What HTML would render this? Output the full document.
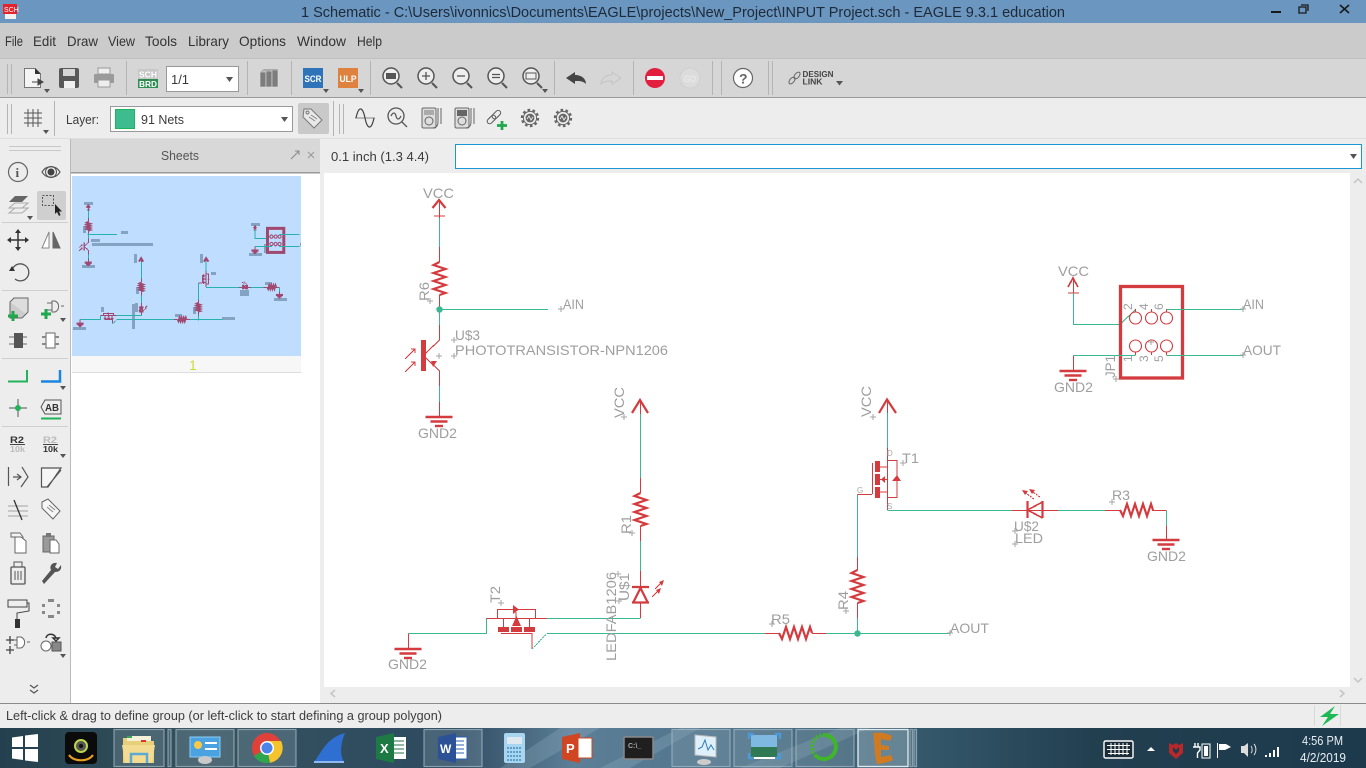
<!DOCTYPE html>
<html><head><meta charset="utf-8"><title>EAGLE Schematic</title>
<style>
html,body{margin:0;padding:0;width:1366px;height:768px;overflow:hidden;background:#ededed}
svg{display:block;position:absolute;left:0;top:0}
text{font-family:"Liberation Sans",sans-serif}
.r{stroke:var(--r);fill:none;stroke-width:var(--w);shape-rendering:crispEdges}
.g{stroke:var(--g);fill:none;stroke-width:var(--w);shape-rendering:crispEdges}
.t{stroke:var(--r);fill:none;stroke-width:calc(var(--w)*2)}
.f{fill:var(--r);stroke:none}
.st{fill:#9e9e9e;font-size:14px}
.sm{fill:#a8a8a8;font-size:8px}
.ui{fill:#3a3a3a;font-size:13px}
.ic{fill:none;stroke:#555;stroke-width:1.3}
.sep{stroke:#b4b4b4;stroke-width:1}
.tb{fill:#8fa6b2;fill-opacity:.28;stroke:#a9bcc6;stroke-opacity:.7;stroke-width:1.2}
.dd{fill:#555}
</style></head>
<body>
<svg width="1366" height="768" viewBox="0 0 1366 768" xmlns="http://www.w3.org/2000/svg">
<defs>
<linearGradient id="tk" x1="0" x2="1" y1="0" y2="0">
<stop offset="0" stop-color="#24404e"/><stop offset=".15" stop-color="#35525e"/><stop offset=".33" stop-color="#2d4a60"/><stop offset=".42" stop-color="#5c7f97"/><stop offset=".55" stop-color="#4d7289"/><stop offset=".68" stop-color="#34576a"/><stop offset=".8" stop-color="#223f50"/><stop offset="1" stop-color="#1c3a4c"/>
</linearGradient>
<clipPath id="mapc"><rect x="72" y="176" width="229" height="180"/></clipPath>
<path id="p" d="M-3 0H3M0 -3V3" stroke="#a6a6a6" fill="none" stroke-width="1"/>
<g id="mg"><circle cx="-1" cy="-2" r="8" fill="#eee" stroke="#555" stroke-width="1.5"/><path d="M5 5L10 10" stroke="#555" stroke-width="2"/></g>
<g id="gear"><circle r="8" fill="none" stroke="#666" stroke-width="2.4" stroke-dasharray="2.6 2.4"/><circle r="6.6" fill="#ededed" stroke="#666" stroke-width="1"/><circle r="4.4" fill="#666"/><path d="M-3 1L-1 -2L1 2L3 -1" stroke="#eee" fill="none" stroke-width=".9"/></g>
<polyline id="rv" points="0,0 -6,3 6,7 -6,11 6,15 -6,19 6,23 -6,27 6,31 0,33" style="stroke:var(--r);fill:none;stroke-width:calc(var(--w)*2)"/>
<polyline id="rh" points="0,0 3,6 7,-6 11,6 15,-6 19,6 23,-6 27,6 31,-6 33,0" style="stroke:var(--r);fill:none;stroke-width:calc(var(--w)*2)"/>
<g id="gnd"><path d="M-13.500 0H13.500" style="stroke:var(--r);stroke-width:calc(var(--w)*2.2)"/><path d="M-8.500 4.500H8.500" style="stroke:var(--r);stroke-width:calc(var(--w)*2.2)"/><path d="M-4 9H4" style="stroke:var(--r);stroke-width:calc(var(--w)*2.2)"/></g>
<g id="sch">
<!-- U3 branch -->
<path class="t" d="M432.500 208L439 200L445.500 208"/>
<path class="r" d="M439.500 200V218M434 216H445"/>
<path class="g" d="M439.500 218V247"/><path class="r" d="M439.500 247V262"/>
<use href="#rv" x="439.500" y="262"/>
<path class="r" d="M439.500 295V309"/>
<path class="g" d="M439.500 309V325M439.500 309.500H548"/>
<circle cx="439.500" cy="309.500" r="3.200" style="fill:var(--g)"/>
<path class="r" d="M439.500 325V340L426 353M426 358L439.500 371V386"/>
<rect class="f" x="421" y="340" width="5" height="31"/>
<path class="f" d="M431 361L437 361L433 367Z"/>
<path class="r" d="M405 359L415 349M405 372L415 362M411 349H415V353M411 362H415V366"/>
<path class="g" d="M439.500 386V402"/><path class="r" d="M439.500 402V417"/>
<use href="#gnd" x="439" y="417"/>
<!-- R1 / LED branch -->
<path class="t" d="M632 413L640 400L648 413"/>
<path class="r" d="M640.500 400V414"/>
<path class="g" d="M640.500 414V478"/><path class="r" d="M640.500 478V493"/>
<use href="#rv" x="640.500" y="493"/>
<path class="r" d="M640.500 526V541"/><path class="g" d="M640.500 541V571"/>
<path class="r" d="M640.500 571V587M640.500 602V618"/>
<path class="t" d="M632 587H649M632 602.500H649M640.500 588L633.500 602M640.500 588L647.500 602"/>
<path class="r" d="M652 597L660 589M655 589L663 581"/>
<path class="f" d="M656 590L661 588L659 594ZM659 582L664 580L662 586Z"/>
<path class="g" d="M547 618.500H640.500"/>
<path class="r" d="M486 618.500H547"/>
<path class="g" d="M486.500 618.500V633.500H408.500"/>
<path class="r" d="M408.500 633.500V649M497.500 618V609.500H535.500V618M503.500 618V627M529.500 618V627M516 612V618"/>
<use href="#gnd" x="408" y="649"/>
<path class="f" d="M513 605L519 609.500L513 614ZM516.500 616L512 626H521Z"/>
<rect class="f" x="498" y="627" width="11" height="5"/><rect class="f" x="511" y="627" width="11" height="5"/><rect class="f" x="524" y="627" width="11" height="5"/>
<path class="r" d="M501 633.500H532V649"/>
<path class="g" stroke-dasharray="2 1" d="M532 649L547 633.500"/>
<path class="g" d="M547 633.500H765"/>
<path class="r" d="M765 633.500H779"/>
<use href="#rh" x="779" y="633"/>
<path class="r" d="M812 633.500H826"/>
<path class="g" d="M826 633.500H950"/>
<circle cx="857.500" cy="633.500" r="3.200" style="fill:var(--g)"/>
<!-- R4 / T1 -->
<path class="g" d="M857.500 618V633"/><path class="r" d="M857.500 603V618"/>
<use href="#rv" x="857.500" y="570"/>
<path class="r" d="M857.500 557V570"/><path class="g" d="M857.500 494V557"/>
<path class="r" d="M857.500 494.500H872M872.500 463V494"/>
<rect class="f" x="875" y="461" width="5" height="11"/><rect class="f" x="875" y="474" width="5" height="11"/><rect class="f" x="875" y="487" width="5" height="11"/>
<path class="r" d="M880 467H887.500M880 479.500H887.500M880 492H887.500M887.500 448V510M887.500 460.500H897V497.500H887.500"/>
<path class="f" d="M881 479.500L885 476V483ZM897 475L892 481H901Z"/>
<path class="t" d="M879 413L887 399.500L896 413"/>
<path class="r" d="M887.500 399V413"/>
<path class="g" d="M887.500 413V448"/>
<path class="g" d="M887.500 510.500H1012"/>
<path class="r" d="M1012 510.500H1058"/>
<path class="t" d="M1027.500 501V518M1042.500 501V518"/>
<path class="r" d="M1027.500 510L1042.500 502M1027.500 510L1042.500 518" style="stroke-width:calc(var(--w)*1.5)"/>
<path class="r" stroke-dasharray="2 1" d="M1034 499L1023 491M1040 497L1030 490"/>
<path class="f" d="M1022 490L1028 491L1025 495ZM1029 489L1035 490L1032 494Z"/>
<path class="g" d="M1058 510.500H1105"/><path class="r" d="M1105 510.500H1120"/>
<use href="#rh" x="1120" y="510"/>
<path class="r" d="M1152 510.500H1166.500"/>
<path class="g" d="M1166.500 510.500V526"/><path class="r" d="M1166.500 526V540"/>
<use href="#gnd" x="1166" y="540"/>
<!-- JP1 -->
<path class="r" style="stroke-width:calc(var(--w)*1.5)" d="M1068 287L1073 278L1078 287"/>
<path class="r" d="M1073.500 278V293M1068 293H1079"/>
<path class="g" d="M1073.500 293V324.500H1120L1136 309"/>
<rect x="1120.500" y="286.500" width="62" height="91.500" style="fill:none;stroke:var(--r);stroke-width:calc(var(--w)*3)"/>
<g style="stroke:var(--r);fill:none;stroke-width:var(--w)"><circle cx="1135.500" cy="318" r="6"/><circle cx="1151.500" cy="318" r="6"/><circle cx="1166.500" cy="318" r="6"/><circle cx="1135.500" cy="346" r="6"/><circle cx="1151.500" cy="346" r="6"/><circle cx="1166.500" cy="346" r="6"/></g>
<path class="r" d="M1135.500 309V312M1151.500 309V312M1166.500 309V312M1135.500 352V355M1151.500 352V355M1166.500 352V355"/>
<path class="g" d="M1166.500 309.500H1243M1166.500 355.500H1243M1073.500 355.500H1135.500"/>
<path class="r" d="M1073.500 355.500V371"/>
<use href="#gnd" x="1073" y="371"/>
</g>
</defs>

<!-- Title bar -->
<rect width="1366" height="23" fill="#6b96c0"/>
<rect x="3" y="4" width="14" height="10" fill="#e1242e"/><rect x="5" y="14" width="11" height="5" fill="#f0f0f0"/>
<text x="4" y="12" font-size="7" fill="#fff">SCH</text>
<text x="301" y="17" font-size="14.500" fill="#1d2a38" textLength="764" lengthAdjust="spacingAndGlyphs">1 Schematic - C:\Users\ivonnics\Documents\EAGLE\projects\New_Project\INPUT Project.sch - EAGLE 9.3.1 education</text>
<path d="M1271 12H1281" stroke="#1a1a1a" stroke-width="2"/>
<path d="M1299 7h7v6h-7zM1301 5h7v6" fill="none" stroke="#1a1a1a" stroke-width="1.300"/>
<path d="M1340 5L1349 13M1349 5L1340 13" stroke="#1a1a1a" stroke-width="1.600"/>

<!-- Menu -->
<rect y="23" width="1366" height="35" fill="#cbcbcb"/>
<g font-size="14" fill="#333">
<text x="5" y="46" textLength="18" lengthAdjust="spacingAndGlyphs">File</text><text x="33" y="46" textLength="23" lengthAdjust="spacingAndGlyphs">Edit</text><text x="67" y="46" textLength="31" lengthAdjust="spacingAndGlyphs">Draw</text><text x="108" y="46" textLength="27" lengthAdjust="spacingAndGlyphs">View</text><text x="145" y="46" textLength="32" lengthAdjust="spacingAndGlyphs">Tools</text><text x="188" y="46" textLength="41" lengthAdjust="spacingAndGlyphs">Library</text><text x="239" y="46" textLength="47" lengthAdjust="spacingAndGlyphs">Options</text><text x="297" y="46" textLength="49" lengthAdjust="spacingAndGlyphs">Window</text><text x="357" y="46" textLength="25" lengthAdjust="spacingAndGlyphs">Help</text>
</g>

<!-- Toolbar 1 -->
<rect y="58" width="1366" height="40" fill="#d6d6d6"/>
<rect y="58" width="1366" height="1" fill="#c0c0c0"/>
<rect y="97" width="1366" height="1" fill="#999"/>
<path class="sep" d="M7.500 64V94M11.500 64V94M126.500 61V95M247.500 61V95M291.500 61V95M370.500 61V95M554.500 61V95M633.500 61V95M712.500 61V95M721.500 61V95M768.500 61V95M772.500 61V95"/>
<path d="M24.500 68.500H35L40.500 74V87.500H24.500Z" fill="#f4f4f4" stroke="#777"/><path d="M35 68L41 74H35Z" fill="#333"/><path d="M32 82H40M38 79L43 82L38 85Z" stroke="#444" fill="#444"/>
<path class="dd" d="M44 89H50L47 93Z"/>
<rect x="59" y="68" width="20" height="20" rx="2" fill="#585858"/><rect x="63" y="69" width="12" height="7" fill="#d6d6d6"/><rect x="64" y="81" width="11" height="7" fill="#f0f0f0"/>
<rect x="98" y="68" width="12" height="6" fill="#eee" stroke="#999"/><rect x="94" y="74" width="20" height="9" rx="1" fill="#9a9a9a"/><rect x="98" y="80" width="12" height="7" fill="#eee" stroke="#999"/>
<rect x="138" y="69" width="20" height="10" fill="#c8c8c8"/><rect x="138" y="79" width="20" height="9" fill="#2f8c52"/>
<text x="139" y="77.500" font-size="8.500" font-weight="bold" fill="#fff" textLength="18" lengthAdjust="spacingAndGlyphs">SCH</text><text x="139" y="87" font-size="8.500" font-weight="bold" fill="#fff" textLength="18" lengthAdjust="spacingAndGlyphs">BRD</text>
<rect x="166.500" y="66.500" width="72" height="25" fill="#fff" stroke="#999"/>
<text x="171" y="84" class="ui" textLength="18" lengthAdjust="spacingAndGlyphs">1/1</text><path class="dd" d="M226 77H233L229.500 82Z"/>
<g fill="#7d7d7d" stroke="#ddd" stroke-width=".6"><rect x="260" y="72" width="6" height="15"/><rect x="266" y="71" width="6" height="16"/><rect x="272" y="70" width="6" height="17"/></g><path d="M260 72L264 69H278V70" fill="#aaa"/>
<rect x="303" y="68" width="20" height="20" fill="#2f74b8"/><text x="304.500" y="82" font-size="9" font-weight="bold" fill="#fff" textLength="17" lengthAdjust="spacingAndGlyphs">SCR</text><path class="dd" d="M323 89H329L326 93Z"/>
<rect x="338" y="68" width="20" height="20" fill="#df8240"/><text x="339.500" y="82" font-size="9" font-weight="bold" fill="#fff" textLength="17" lengthAdjust="spacingAndGlyphs">ULP</text><path class="dd" d="M358 89H364L361 93Z"/>
<use href="#mg" x="392" y="78"/><rect x="386" y="73" width="10" height="6" fill="#555"/>
<use href="#mg" x="427" y="78"/><path d="M422 76H430M426 72V80" stroke="#555" stroke-width="1.300"/>
<use href="#mg" x="462" y="78"/><path d="M457 76H465" stroke="#555" stroke-width="1.300"/>
<use href="#mg" x="497" y="78"/><path d="M492 74.500H500M492 77.500H500" stroke="#555" stroke-width="1.200"/>
<use href="#mg" x="532" y="78"/><rect x="526" y="73" width="10" height="6" fill="none" stroke="#555"/><path class="dd" d="M542 89H548L545 93Z"/>
<path d="M566 78L575 72V75C582 75 586 79 586 84C583 81 580 81 575 81V84Z" fill="#444"/>
<path d="M621 78L612 72V75C605 75 601 79 601 84C604 81 607 81 612 81V84Z" fill="none" stroke="#c4c4c4"/>
<circle cx="655" cy="78" r="10" fill="#e21f3f"/><rect x="647" y="76" width="16" height="4" fill="#fff"/>
<circle cx="690" cy="78" r="10" fill="#dcdcdc" stroke="#cfcfcf"/><text x="684" y="82" font-size="9" fill="#eee" textLength="12" lengthAdjust="spacingAndGlyphs">GO</text>
<circle cx="743" cy="78" r="9.500" fill="#fff" stroke="#666" stroke-width="1.200"/><text x="739" y="83.500" font-size="14" font-weight="bold" fill="#666">?</text>
<ellipse cx="792" cy="80.500" rx="4" ry="2.200" transform="rotate(-50 792 80.500)" fill="none" stroke="#666"/><ellipse cx="797" cy="75.500" rx="4" ry="2.200" transform="rotate(-50 797 75.500)" fill="none" stroke="#666"/>
<text x="802.500" y="77" font-size="8" font-weight="bold" fill="#444" textLength="31" lengthAdjust="spacingAndGlyphs">DESIGN</text><text x="802.500" y="84.500" font-size="8" font-weight="bold" fill="#444" textLength="20" lengthAdjust="spacingAndGlyphs">LINK</text><path class="dd" d="M836 81H843L839.500 85.500Z"/>

<!-- Toolbar 2 -->
<rect y="98" width="1366" height="41" fill="#ededed"/>
<rect y="138" width="1366" height="1" fill="#dedede"/>
<path class="sep" d="M7.500 104V134M11.500 104V134M54.500 101V136M333.500 101V136M339.500 104V134M343.500 104V134"/>
<path d="M24 113H42M24 118H42M24 123H42M28 109V127M33 109V127M38 109V127" stroke="#555" fill="none"/><path class="dd" d="M43 130H49L46 134Z"/>
<text x="66" y="124" class="ui" textLength="33" lengthAdjust="spacingAndGlyphs">Layer:</text>
<rect x="110.500" y="106.500" width="182" height="25" fill="#fff" stroke="#999"/>
<rect x="115.500" y="109.500" width="19" height="19" fill="#3dbd8f" stroke="#21b25a"/>
<text x="141" y="124" class="ui" textLength="43" lengthAdjust="spacingAndGlyphs">91 Nets</text><path class="dd" d="M281 117H288L284.500 122Z"/>
<rect x="298" y="103" width="31" height="31" rx="2" fill="#c9c9c9"/>
<path d="M304 109L311 109L322 120L314 128L303 117Z" fill="#e8e8e8" stroke="#777"/><circle cx="307.500" cy="112.500" r="1.500" fill="none" stroke="#777"/>
<path d="M309 117L315 121M311 115L317 119" stroke="#888"/>
<path d="M355 118H375" stroke="#888"/><path d="M356 118C359 104 363 108 365 118C367 128 371 132 374 118" fill="none" stroke="#444" stroke-width="1.200"/>
<circle cx="396" cy="116" r="8" fill="none" stroke="#555" stroke-width="1.300"/><path d="M391 116C393 112 395 112 396 116C397 120 399 120 401 116M402 122L407 127" fill="none" stroke="#555" stroke-width="1.300"/>
<rect x="422" y="108" width="14" height="20" rx="1.500" fill="#ddd" stroke="#666"/><rect x="424" y="110" width="10" height="5" fill="#aaa"/><circle cx="429" cy="121" r="4" fill="none" stroke="#666"/><path d="M438 108V122C438 126 436 128 432 128M441 108V124" stroke="#666" fill="none"/>
<rect x="455" y="108" width="14" height="20" rx="1.500" fill="#ddd" stroke="#666"/><rect x="457" y="110" width="10" height="6" fill="#666"/><circle cx="462" cy="121" r="4" fill="none" stroke="#666"/><path d="M471 108V122C471 126 469 128 465 128M474 108V124" stroke="#666" fill="none"/>
<g transform="rotate(-45 495 116)" fill="none" stroke="#555"><rect x="485" y="113.500" width="10" height="5" rx="2.500"/><rect x="492" y="113.500" width="10" height="5" rx="2.500"/></g>
<path d="M502 121V130M497 125.500H507" stroke="#1fa84c" stroke-width="2.800"/>
<use href="#gear" x="530" y="118"/><use href="#gear" x="563" y="118"/>

<!-- Left panel -->
<rect y="139" width="70" height="565" fill="#ededed"/>
<path d="M9 146.500H61M9 150.500H61" stroke="#c8c8c8"/>
<path d="M2 222.500H68M2 290.500H68M2 358.500H68M2 426.500H68" stroke="#cfcfcf"/>
<rect x="70" y="139" width="1" height="565" fill="#bbb"/>
<circle cx="18" cy="172" r="9.500" fill="none" stroke="#666" stroke-width="1.200"/><text x="15.500" y="177" font-size="13" font-weight="bold" fill="#555" style="font-family:'Liberation Serif',serif">i</text>
<path d="M42 172C46 165 56 165 60 172C56 179 46 179 42 172Z" fill="none" stroke="#555" stroke-width="1.200"/><circle cx="51" cy="172" r="3.500" fill="#444"/><circle cx="51" cy="172" r="5.500" fill="none" stroke="#555"/>
<path d="M9 213L15 208H28L22 213Z" fill="none" stroke="#aaa"/><path d="M9 208L15 203H28L22 208Z" fill="#eee" stroke="#aaa"/><path d="M9 202L15 196H28L22 202Z" fill="#666"/>
<path class="dd" d="M27 216H33L30 220Z"/>
<rect x="37" y="191" width="29" height="29" rx="2" fill="#cfcfcf"/>
<rect x="42.500" y="195.500" width="11" height="10" fill="none" stroke="#555" stroke-dasharray="2 1.500"/><path d="M55 204V214L57 212L59 216L60.500 215L59 211.500H62Z" fill="#222"/>
<path d="M18 230V250M8 240H28" stroke="#333" stroke-width="1.500"/><path d="M18 229L15 233H21ZM18 251L15 247H21ZM7 240L11 237V243ZM29 240L25 237V243Z" fill="#333"/>
<path d="M49 232V248H42Z" fill="#fff" stroke="#888"/><path d="M53 232V248H60Z" fill="#666" stroke="#666"/>
<path d="M13 268A8.500 8.500 0 1 1 15 279" fill="none" stroke="#555" stroke-width="1.300"/><path d="M9 271H15L12 266Z" fill="#333"/>
<path d="M10 302H26V314L22 318H10Z" fill="#ccc" stroke="#666"/><path d="M10 302L14 298H28V312L26 314" fill="#ddd" stroke="#666"/>
<path d="M13 311V321M8 316H18" stroke="#1fa84c" stroke-width="3"/>
<path d="M52 301H55A6 6 0 0 1 55 312H52ZM47 303H52M47 310H52M61 306H64" fill="none" stroke="#666"/>
<path d="M46 309V319M41 314H51" stroke="#1fa84c" stroke-width="3"/>
<path class="dd" d="M60 318H66L63 322Z"/>
<rect x="14" y="333" width="9" height="15" fill="#555"/><path d="M9 337H14M9 344H14M23 337H27M23 344H27" stroke="#aaa" stroke-width="2"/>
<rect x="46" y="333" width="9" height="15" fill="#fff" stroke="#666"/><path d="M42 337H46M42 344H46M55 337H59M55 344H59" stroke="#888" stroke-width="2"/>
<path d="M8 381.500H27V370" fill="none" stroke="#21b25a" stroke-width="2"/>
<path d="M41 381.500H60V370" fill="none" stroke="#1b86e0" stroke-width="2.500"/><path class="dd" d="M60 386H66L63 390Z"/>
<path d="M18 399V417M9 408H27" stroke="#555"/><circle cx="18" cy="408" r="3" fill="#21b25a"/>
<path d="M45 400H61V414H45L41 407Z" fill="none" stroke="#555"/><text x="45" y="411" font-size="10" font-weight="bold" fill="#333" textLength="14" lengthAdjust="spacingAndGlyphs">AB</text><path d="M41 418.500H61" stroke="#21b25a" stroke-width="2"/>
<text x="10" y="443" font-size="9.500" font-weight="bold" fill="#333" textLength="14" lengthAdjust="spacingAndGlyphs">R2</text><path d="M10 444.500H25" stroke="#444"/><text x="10" y="452" font-size="8" font-weight="bold" fill="#bbb" textLength="15" lengthAdjust="spacingAndGlyphs">10k</text>
<text x="43" y="443" font-size="9.500" font-weight="bold" fill="#bbb" textLength="14" lengthAdjust="spacingAndGlyphs">R2</text><path d="M43 444.500H58" stroke="#444"/><text x="43" y="452" font-size="8" font-weight="bold" fill="#333" textLength="15" lengthAdjust="spacingAndGlyphs">10k</text><path class="dd" d="M60 454H66L63 458Z"/>
<path d="M8.500 467V486M13 477H20M17 474L21 477L17 480M22 467L28 477L21 487" fill="none" stroke="#555" stroke-width="1.200"/>
<path d="M41.500 468H61L48 487H41.500ZM47 487L61 470" fill="#f6f6f6" stroke="#555" stroke-width="1.200"/>
<path d="M8 506H28M8 511H28M8 516H28" stroke="#bbb" stroke-width="1.500"/><path d="M14 500L22 520" stroke="#333" stroke-width="1.300"/>
<path d="M42 502L48 499L60 511L53 519L42 508Z" fill="#f6f6f6" stroke="#666"/><path d="M47 507L53 512M49 505L55 510" stroke="#888"/>
<path d="M11 533H20L23 537V552H15V537H11Z" fill="#f4f4f4" stroke="#666"/><path d="M15 537H21L26 541V553H15Z" fill="#fff" stroke="#666"/>
<rect x="43" y="536" width="11" height="16" fill="#999" stroke="#666"/><rect x="46" y="533" width="5" height="4" fill="#777"/><path d="M50 540H56L59 544V553H50Z" fill="#fff" stroke="#666"/>
<rect x="11" y="567" width="14" height="17" rx="1" fill="none" stroke="#555" stroke-width="1.300"/><path d="M14 567V562H22V567" fill="none" stroke="#555"/><path d="M15 571V580M18 571V580M21 571V580" stroke="#555"/>
<path d="M44 584L55 572C59 572 62 570 61 565L58 569L55 567L57 563C52 562 49 566 51 570L42 581Z" fill="#555"/>
<path d="M8 600H27V607H8Z" fill="#eee" stroke="#444"/><path d="M27 603H29V611L17 613V619" fill="none" stroke="#444"/><rect x="15" y="619" width="5" height="9" fill="#333"/>
<g fill="#888"><rect x="48" y="599" width="6" height="3"/><rect x="48" y="615" width="6" height="3"/><rect x="42" y="604" width="3" height="3"/><rect x="57" y="604" width="3" height="3"/><rect x="42" y="611" width="3" height="3"/><rect x="57" y="611" width="3" height="3"/></g>
<path d="M10 636V644M6 640H14M10 646V654M6 650H14" stroke="#444" stroke-width="1.300"/><path d="M17 637H21A6 6 0 0 1 21 648H17ZM14 640H17M14 645H17M27 642H30" fill="#fff" stroke="#666"/>
<circle cx="46" cy="646" r="5" fill="#fff" stroke="#666"/><rect x="52" y="642" width="9" height="9" fill="#888" stroke="#555"/><path d="M46 638C47 633 54 633 56 638M53 638H59L56 641Z" fill="none" stroke="#333" stroke-width="1.500"/><path class="dd" d="M60 654H66L63 658Z"/>
<path d="M30 685L34 688L38 685M30 690L34 693L38 690" fill="none" stroke="#555" stroke-width="1.200"/>

<!-- Sheets panel -->
<rect x="71" y="139" width="249" height="33" fill="#d8d8d8"/>
<text x="161" y="160" font-size="12.500" fill="#555" textLength="38" lengthAdjust="spacingAndGlyphs">Sheets</text>
<path d="M291 159L299 151M295 151H299V155" fill="none" stroke="#888"/><path d="M308 152L314 158M314 152L308 158" stroke="#999"/>
<rect x="71" y="172" width="249" height="532" fill="#fff"/>
<rect x="71" y="172" width="249" height="1.500" fill="#999"/>
<rect x="72" y="176" width="229" height="180" fill="#bfdeff"/>
<rect x="72" y="356" width="229" height="16" fill="#f7f7f7"/>
<rect x="72" y="372" width="229" height="1" fill="#ddd"/>
<text x="189" y="370" font-size="14" fill="#c8dd3c">1</text>
<g clip-path="url(#mapc)">
<g fill="#84a3c2">
<rect x="84" y="202" width="9" height="3"/><rect x="83" y="226" width="3" height="7"/><rect x="121" y="231" width="7" height="3"/><rect x="91" y="239" width="9" height="3"/><rect x="92" y="243" width="61" height="3"/><rect x="82" y="265" width="13" height="3"/><rect x="134" y="254" width="3" height="9"/><rect x="200" y="254" width="3" height="9"/><rect x="211" y="272" width="5" height="3"/><rect x="251" y="223" width="9" height="3"/><rect x="264" y="244" width="3" height="9"/><rect x="249" y="253" width="13" height="3"/><rect x="265" y="282" width="7" height="3"/><rect x="240" y="290" width="9" height="6"/><rect x="274" y="298" width="13" height="3"/><rect x="175" y="314" width="7" height="3"/><rect x="193" y="307" width="3" height="7"/><rect x="222" y="317" width="13" height="3"/><rect x="132" y="304" width="3" height="25"/><rect x="135" y="303" width="3" height="9"/><rect x="136" y="287" width="3" height="7"/><rect x="101" y="307" width="3" height="5"/><rect x="73" y="327" width="13" height="3"/><rect x="300" y="243" width="1" height="3"/>
</g>
<use href="#sch" transform="translate(-27.200 153) scale(.263)" style="--r:#a04870;--g:#27b2ad;--w:3.800"/>
</g>

<!-- Canvas area -->
<rect x="320" y="139" width="1046" height="565" fill="#ededed"/>
<text x="331" y="161" class="ui" textLength="98" lengthAdjust="spacingAndGlyphs">0.1 inch (1.3 4.4)</text>
<rect x="455.500" y="144.500" width="906" height="24" fill="#fff" stroke="#1a96d4"/>
<path class="dd" d="M1350 154H1357L1353.500 159Z"/>
<rect x="324" y="173" width="1026" height="514" fill="#fff"/>
<path d="M1354 183L1358 179L1362 183M1354 678L1358 682L1362 678M335 690L331 693.500L335 697M1340 690L1344 693.500L1340 697" fill="none" stroke="#c4c4c4" stroke-width="1.500"/>

<use href="#sch" style="--r:#d33b3f;--g:#3bb88f;--w:1.100"/>

<!-- Schematic text -->
<g class="st">
<text x="423" y="198" textLength="31" lengthAdjust="spacingAndGlyphs">VCC</text>
<text x="418" y="438" textLength="39" lengthAdjust="spacingAndGlyphs">GND2</text>
<text x="563" y="309" textLength="21" lengthAdjust="spacingAndGlyphs">AIN</text>
<text x="455" y="340" textLength="25" lengthAdjust="spacingAndGlyphs">U$3</text>
<text x="455" y="355" textLength="213" lengthAdjust="spacingAndGlyphs">PHOTOTRANSISTOR-NPN1206</text>
<text transform="translate(429 301) rotate(-90)" textLength="19" lengthAdjust="spacingAndGlyphs">R6</text>
<text transform="translate(624 418) rotate(-90)" textLength="31" lengthAdjust="spacingAndGlyphs">VCC</text>
<text transform="translate(631 534) rotate(-90)" textLength="19" lengthAdjust="spacingAndGlyphs">R1</text>
<text transform="translate(616 661) rotate(-90)" textLength="89" lengthAdjust="spacingAndGlyphs">LEDFAB1206</text>
<text transform="translate(629 601) rotate(-90)" textLength="28" lengthAdjust="spacingAndGlyphs">U$1</text>
<text transform="translate(500 603) rotate(-90)" textLength="17" lengthAdjust="spacingAndGlyphs">T2</text>
<text x="388" y="669" textLength="39" lengthAdjust="spacingAndGlyphs">GND2</text>
<text x="771" y="624" textLength="19" lengthAdjust="spacingAndGlyphs">R5</text>
<text transform="translate(848 610) rotate(-90)" textLength="19" lengthAdjust="spacingAndGlyphs">R4</text>
<text x="950" y="633" textLength="39" lengthAdjust="spacingAndGlyphs">AOUT</text>
<text transform="translate(871 417) rotate(-90)" textLength="31" lengthAdjust="spacingAndGlyphs">VCC</text>
<text x="902" y="463" textLength="17" lengthAdjust="spacingAndGlyphs">T1</text>
<text x="1014" y="531" textLength="25" lengthAdjust="spacingAndGlyphs">U$2</text>
<text x="1015" y="543" textLength="28" lengthAdjust="spacingAndGlyphs">LED</text>
<text x="1112" y="500" textLength="18" lengthAdjust="spacingAndGlyphs">R3</text>
<text x="1147" y="561" textLength="39" lengthAdjust="spacingAndGlyphs">GND2</text>
<text x="1058" y="276" textLength="31" lengthAdjust="spacingAndGlyphs">VCC</text>
<text x="1054" y="392" textLength="39" lengthAdjust="spacingAndGlyphs">GND2</text>
<text x="1243" y="309" textLength="21" lengthAdjust="spacingAndGlyphs">AIN</text>
<text x="1243" y="355" textLength="38" lengthAdjust="spacingAndGlyphs">AOUT</text>
<text transform="translate(1115 378) rotate(-90)" textLength="23" lengthAdjust="spacingAndGlyphs">JP1</text>
</g>
<g class="sm">
<text x="887" y="456">D</text><text x="857" y="493">G</text><text x="887" y="509">S</text>
</g>
<g fill="#9e9e9e" font-size="12">
<text transform="translate(1132 310) rotate(-90)">2</text><text transform="translate(1148 310) rotate(-90)">4</text><text transform="translate(1163 310) rotate(-90)">6</text>
<text transform="translate(1132 362) rotate(-90)">1</text><text transform="translate(1148 362) rotate(-90)">3</text><text transform="translate(1163 362) rotate(-90)">5</text>
</g>
<g>
<use href="#p" x="454" y="340"/><use href="#p" x="454" y="356"/><use href="#p" x="439" y="356"/><use href="#p" x="561" y="309"/><use href="#p" x="430" y="301"/><use href="#p" x="624" y="417"/><use href="#p" x="632" y="533"/><use href="#p" x="619" y="601"/><use href="#p" x="618" y="574"/><use href="#p" x="501" y="603"/><use href="#p" x="772" y="624"/><use href="#p" x="846" y="611"/><use href="#p" x="950" y="633"/><use href="#p" x="873" y="417"/><use href="#p" x="903" y="463"/><use href="#p" x="1015" y="531"/><use href="#p" x="1015" y="544"/><use href="#p" x="1112" y="502"/><use href="#p" x="1116" y="379"/><use href="#p" x="1243" y="309"/><use href="#p" x="1243" y="355"/><use href="#p" x="1151" y="342"/>
</g>

<!-- Status bar -->
<rect y="703" width="1366" height="1" fill="#8a8a8a"/>
<rect y="704" width="1366" height="24" fill="#ededed"/>
<text x="6" y="720" font-size="12.500" fill="#3d3d3d" textLength="436" lengthAdjust="spacingAndGlyphs">Left-click &amp; drag to define group (or left-click to start defining a group polygon)</text>
<path d="M1314.500 705V726M1340.500 705V726" stroke="#d8d8d8"/>
<path d="M1335 706L1320 717L1328 717L1322 726L1339 714L1330 714Z" fill="#1db954"/>

<!-- Taskbar -->
<rect y="728" width="1366" height="40" fill="url(#tk)"/>
<path d="M500 768L560 728H600L530 768ZM600 768L680 728H700L630 768ZM740 768L840 728H870L780 768Z" fill="#a9c6d8" fill-opacity=".22"/>
<path d="M12 737.500L23 736V747H12ZM25 735.500L38 734V747H25ZM12 749H23V760L12 758.500ZM25 749H38V762L25 760.500Z" fill="#fff"/>
<rect x="65" y="732" width="32" height="32" rx="4" fill="#0b0b0b"/><circle cx="81" cy="746" r="6" fill="#555" stroke="#bcd84a" stroke-width="2"/><circle cx="81" cy="746" r="2" fill="#111"/><path d="M69 755C74 762 88 762 93 755" fill="none" stroke="#e8a020" stroke-width="2"/>
<rect x="114" y="729.500" width="50" height="37" class="tb"/><rect x="168" y="729.500" width="3" height="37" class="tb"/>
<path d="M123 738H137L140 741H154V763H123Z" fill="#e8cf7a"/><rect x="127" y="736" width="24" height="5" fill="#f5f0d8"/><rect x="127" y="736" width="5" height="2" fill="#3aa655"/><rect x="141" y="740" width="5" height="2" fill="#d33"/><path d="M122 745H155L152 763H125Z" fill="#f3dc91"/><path d="M131 763V754H147V763" fill="none" stroke="#5ba9d4" stroke-width="2.500"/>
<rect x="176" y="729.500" width="58" height="37" class="tb"/>
<rect x="190" y="737" width="30" height="20" fill="#4aa3e0" stroke="#8fcdf5"/><circle cx="198" cy="745" r="4" fill="#f7c948"/><path d="M205 743H217M205 749H217" stroke="#fff" stroke-width="2"/><ellipse cx="205" cy="760" rx="7" ry="4" fill="#c9c9c9"/>
<rect x="238" y="729.500" width="58" height="37" class="tb"/>
<circle cx="267" cy="748" r="15" fill="#e0403a"/><path d="M267 748L254 756A15 15 0 0 0 270 762.700Z" fill="#2fa54f"/><path d="M267 748L270 762.700A15 15 0 0 0 281 741L267 741Z" fill="#f5c32c"/><circle cx="267" cy="748" r="7" fill="#fff"/><circle cx="267" cy="748" r="5.500" fill="#4a84e8"/>
<path d="M314 762C322 752 326 738 345 733C340 745 340 755 344 762Z" fill="#2e6fd1"/><path d="M314 762H344" stroke="#8fb8ef" stroke-width="2"/>
<rect x="390" y="737" width="16" height="22" fill="#fff"/><path d="M393 741H404M393 745H404M393 749H404M393 753H404" stroke="#217346"/><path d="M376 737L394 733V763L376 759Z" fill="#1d7a45"/><text x="380" y="753" font-size="13" font-weight="bold" fill="#fff">X</text>
<rect x="424" y="729.500" width="58" height="37" class="tb"/>
<rect x="450" y="737" width="17" height="22" fill="#fff" stroke="#2b5fb0"/><path d="M453 741H464M453 745H464M453 749H464M453 753H464" stroke="#2b5fb0"/><path d="M438 737L456 733V763L438 759Z" fill="#2b5197"/><text x="440" y="753" font-size="12" font-weight="bold" fill="#fff">W</text>
<rect x="504" y="733" width="21" height="30" rx="2" fill="#a8d6f0"/><rect x="507" y="737" width="15" height="7" fill="#dfe8ee"/><path d="M507 748H522M507 752H522M507 756H522M507 760H522" stroke="#5e9fc9" stroke-width="2" stroke-dasharray="2 1"/>
<path d="M562 737L580 733V763L562 759Z" fill="#d04623"/><rect x="578" y="738" width="14" height="20" fill="#fff" stroke="#d04623"/><text x="566" y="753" font-size="13" font-weight="bold" fill="#fff">P</text>
<rect x="624" y="737" width="29" height="22" rx="1" fill="#1f1f1f" stroke="#8a8a8a" stroke-width="1.500"/><text x="628" y="748" font-size="7" font-weight="bold" fill="#aaa">C:\_</text>
<rect x="672" y="729.500" width="58" height="37" class="tb"/>
<path d="M695 735L716 737V757L695 755Z" fill="#e0f0fa" stroke="#bbb"/><path d="M698 749L702 747L705 740L708 750L711 745L714 750" stroke="#2a7fc0" fill="none"/><ellipse cx="704" cy="762" rx="7" ry="3" fill="#ccc"/>
<rect x="734" y="729.500" width="58" height="37" class="tb"/>
<rect x="751" y="735" width="26" height="22" fill="#7fb8e0"/><rect x="751" y="747" width="26" height="10" fill="#2f7a55"/><rect x="751" y="757" width="26" height="2" fill="#fff"/><path d="M749 739V734H754M780 739V734H775M749 753V758H754M780 753V758H775" stroke="#4a9ad8" stroke-width="2.500" fill="none"/>
<rect x="796" y="729.500" width="58" height="37" class="tb"/>
<path d="M825 735A12 12 0 1 1 816 756" fill="none" stroke="#3fb52a" stroke-width="4"/><path d="M816 756A12 12 0 0 1 825 735" fill="none" stroke="#3fb52a" stroke-width="4" stroke-dasharray="2 1.500"/>
<rect x="858" y="729.500" width="50" height="37" fill="#9db5c2" fill-opacity=".45" stroke="#dfe8ec" stroke-width="1.400"/><rect x="910" y="729.500" width="2.500" height="37" class="tb"/><rect x="914" y="729.500" width="2.500" height="37" class="tb"/>
<path d="M873 733C880 732 886 733 892 736L890 741L881 739L881 745L889 746V750L881 750L881 757L891 755L893 760C886 763 880 764 877 764C874 755 875 745 873 733Z" fill="#d07a22"/>
<rect x="1104" y="741" width="29" height="17" rx="1.500" fill="#1a2c38" stroke="#fff" stroke-width="1.400"/>
<path d="M1107 745.500H1130M1107 749.500H1130M1108 753.500H1129M1111 743V755M1115 743V755M1119 743V755M1123 743V755M1127 743V755" stroke="#fff"/>
<path d="M1147 751L1151 747L1155 751Z" fill="#fff"/>
<path d="M1169 743L1173 745L1176 743L1179 745L1183 743V753L1176 759L1169 753Z" fill="#b8282b"/><path d="M1173 747L1176 750L1179 747V751L1176 754L1173 751Z" fill="#1d3a4c"/>
<path d="M1195 743V747M1198 743V747M1193 747H1200V750L1197.500 753V758" stroke="#fff" fill="none" stroke-width="1.400"/><rect x="1202" y="744" width="8" height="14" fill="none" stroke="#fff"/><rect x="1204" y="746" width="4" height="10" fill="#fff"/>
<path d="M1217.500 743V758" stroke="#fff"/><path d="M1219 744H1226L1231 747L1225 750H1219Z" fill="#fff"/>
<path d="M1241 746H1244L1248 743V757L1244 753H1241Z" fill="#ddd"/><path d="M1251 746C1252.500 748 1252.500 752 1251 753M1254 744C1256.500 747 1256.500 752 1254 755" stroke="#ddd" fill="none"/>
<path d="M1265 755h2v2h-2zM1269 753h2v4h-2zM1273 750h2v7h-2zM1277 747h2v10h-2z" fill="#fff"/>
<text x="1302" y="745" font-size="12.500" fill="#e8eef2" textLength="41" lengthAdjust="spacingAndGlyphs">4:56 PM</text>
<text x="1300" y="762" font-size="12.500" fill="#e8eef2" textLength="46" lengthAdjust="spacingAndGlyphs">4/2/2019</text>
</svg>
</body></html>
